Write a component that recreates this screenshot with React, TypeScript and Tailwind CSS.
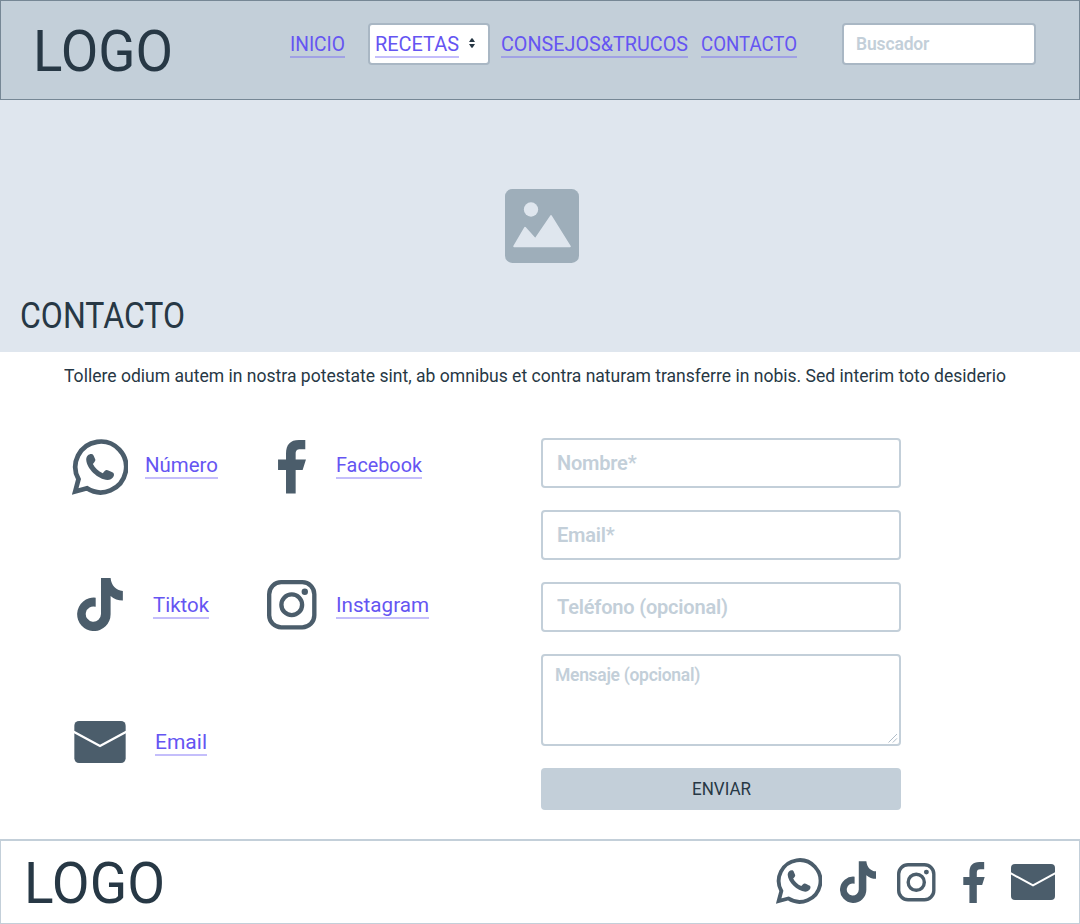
import { useLayoutEffect, useRef, useState } from "react";
import type { ReactNode } from "react";

/** Single line of text, condensed or widened to fill the width of its box. */
function FitText({ children, className = "" }: { children: ReactNode; className?: string }) {
  const box = useRef<HTMLSpanElement>(null);
  const text = useRef<HTMLSpanElement>(null);
  const [scale, setScale] = useState(1);
  useLayoutEffect(() => {
    if (box.current && text.current && text.current.offsetWidth) {
      setScale(box.current.clientWidth / text.current.getBoundingClientRect().width);
    }
  }, []);
  return (
    <span ref={box} className={`block whitespace-nowrap ${className}`}>
      <span ref={text} className="inline-block origin-left align-top" style={{ transform: `scaleX(${scale})` }}>
        {children}
      </span>
    </span>
  );
}

function NavLink({ children, className = "" }: { children: ReactNode; className?: string }) {
  return (
    <a href="#" className={`block shrink-0 border-b-2 border-[#6b5cf6]/40 text-[#6555f2] ${className}`}>
      <FitText className="h-6 w-full text-[21px] leading-6 font-[450]">{children}</FitText>
    </a>
  );
}

type IconProps = { className?: string };

function WhatsappIcon({ className }: IconProps) {
  return (
    <svg viewBox="0 0 56 56" className={className}>
      <path d="M3.200 52.500 L6.500 40.200 A25.400 25.400 0 1 1 15 49.300 Z" fill="none" stroke="currentColor" strokeWidth="4.700" />
      <path
        d="M14.2 20.5C14.2 17 16.8 14.8 19.4 14.9C20.7 14.9 21.3 15.6 21.8 16.9L23.3 20.6C23.7 21.7 22.8 22.9 20.9 25C22.7 28.8 26.3 32.3 30.8 34.2C32.8 31.9 33.6 30.8 34.8 31C36.6 31.3 39.6 32.8 41.2 33.8C43.6 36.2 40.4 41 35.6 41C25.8 40.4 14.6 29.6 14.2 20.5Z"
        fill="currentColor"
      />
    </svg>
  );
}

function FacebookIcon({ className }: IconProps) {
  return (
    <svg viewBox="84 45 84 161" className={className} fill="currentColor">
      <path d="M108 206V135H84V104H108V86C108 59 121 45 147 45H166V73H151C141 73 137 77 137 87V104H168L158 135H137V206Z" />
    </svg>
  );
}

function TiktokIcon({ className }: IconProps) {
  return (
    <svg viewBox="81 54 138 160" className={className} fill="currentColor">
      <path d="M153 54H182C184 76 198 92 219 93V122C205 122 192 117 182 108V163.5A50.5 50.5 0 1 1 137 113.5V141A23 23 0 1 0 153 163Z" />
    </svg>
  );
}

function InstagramIcon({ className }: IconProps) {
  return (
    <svg viewBox="0 0 148 148" className={className} fill="none" stroke="currentColor" strokeWidth="13">
      <rect x="6.5" y="6.5" width="135" height="135" rx="36" />
      <circle cx="74" cy="74" r="31" />
      <circle cx="113" cy="35" r="9.5" fill="currentColor" stroke="none" />
    </svg>
  );
}

function MailIcon({ className }: IconProps) {
  return (
    <svg viewBox="0 0 154 126" className={className}>
      <rect width="154" height="126" rx="14" fill="currentColor" />
      <path d="M-2 32L77 75L156 32" fill="none" stroke="#fff" strokeWidth="7" />
    </svg>
  );
}

function ImageIcon({ className }: IconProps) {
  return (
    <svg viewBox="45 27 222 222" className={className}>
      <rect x="45" y="27" width="222" height="222" rx="22" fill="#9eaeba" />
      <g fill="#dfe6ee" stroke="#dfe6ee" strokeLinejoin="round">
        <circle cx="123" cy="88.500" r="21.500" stroke="none" />
        <path d="M72 199L105 143L136 177L183 108L240 199Z" strokeWidth="5" />
      </g>
    </svg>
  );
}

const fieldClass =
  "block h-[50px] w-full rounded border-2 border-[#c3cfd9] bg-white px-[14px] text-[20px] font-semibold tracking-[-0.2px] text-[#273845] outline-none placeholder:text-[#c3cfd9] placeholder:opacity-100";

export default function App() {
  return (
    <div className="flex h-[924px] w-[1080px] flex-col overflow-hidden bg-white font-['Roboto','Liberation_Sans',sans-serif] text-[#273845]">
      <header className="flex h-[100px] shrink-0 items-start border border-[#768795] bg-[#c3cfd9]">
        <FitText className="mt-[15px] ml-[32px] h-[70px] w-[140px] text-[58px] leading-[70px]">LOGO</FitText>
        <nav className="ml-[117px] flex items-start pt-[22px]">
          <NavLink className="mt-[9px] w-[55px]">INICIO</NavLink>
          <div className="ml-[23px] flex h-[42px] w-[122px] items-start rounded border-2 border-[#a9b7c4] bg-white pt-[7px] pl-[5px]">
            <NavLink className="w-[84px]">RECETAS</NavLink>
            <svg viewBox="0 0 6 10" className="mt-[6px] ml-[10px] h-[10px] w-[6px]" fill="#273845">
              <path d="M0 4L2.300 .6Q3 0 3.700 .6L6 4ZM0 6H6L3.700 9.400Q3 10 2.300 9.400Z" />
            </svg>
          </div>
          <NavLink className="mt-[9px] ml-[11px] w-[187px]">CONSEJOS&amp;TRUCOS</NavLink>
          <NavLink className="mt-[9px] ml-[13px] w-[96px]">CONTACTO</NavLink>
        </nav>
        <input
          placeholder="Buscador"
          className="mt-[22px] ml-[45px] h-[42px] w-[194px] rounded border-2 border-[#a9b7c4] bg-white px-3 text-[17.500px] font-semibold tracking-[-0.15px] outline-none placeholder:text-[#c3cfd9] placeholder:opacity-100"
        />
      </header>

      <section className="flex h-[252px] shrink-0 flex-col bg-[#dfe6ee]">
        <ImageIcon className="mt-[89px] ml-[505px] size-[74px]" />
        <FitText className="mt-[31px] ml-[20px] h-[44px] w-[165px] text-[36px] leading-[44px]">CONTACTO</FitText>
      </section>

      <main className="flex h-[487px] shrink-0 flex-col">
        <p className="mt-[12px] ml-[64px]">
          <FitText className="h-6 w-[942px] text-[17.500px] leading-6">
            Tollere odium autem in nostra potestate sint, ab omnibus et contra naturam transferre in nobis. Sed interim toto desiderio
          </FitText>
        </p>
        <div className="flex pt-[50px]">
          <div className="flex w-[541px] flex-col pl-[72px] text-[#4b5d6b]">
            <div className="flex h-[140px] items-start">
              <WhatsappIcon className="mt-px size-[56px]" />
              <NavLink className="mt-[15px] ml-[17px] w-[73px]">Número</NavLink>
              <FacebookIcon className="mt-[2px] ml-[60px] h-[53.500px] w-[28px]" />
              <NavLink className="mt-[15px] ml-[30px] w-[86px]">Facebook</NavLink>
            </div>
            <div className="flex h-[140px] items-start pl-[5px]">
              <TiktokIcon className="h-[53px] w-[46px]" />
              <NavLink className="mt-[15px] ml-[30px] w-[56px]">Tiktok</NavLink>
              <InstagramIcon className="mt-[2px] ml-[58px] size-[49.500px]" />
              <NavLink className="mt-[15px] ml-[19.500px] w-[93px]">Instagram</NavLink>
            </div>
            <div className="flex items-start pl-[2px]">
              <MailIcon className="mt-[3px] h-[42px] w-[52px]" />
              <NavLink className="mt-[12px] ml-[29px] w-[52px]">Email</NavLink>
            </div>
          </div>
          <form className="flex w-[360px] flex-col gap-[22px]">
            <input placeholder="Nombre*" className={fieldClass} />
            <input placeholder="Email*" className={fieldClass} />
            <input placeholder="Teléfono (opcional)" className={fieldClass} />
            <div className="relative h-[92px]">
              <textarea
                placeholder="Mensaje (opcional)"
                className="block h-full w-full resize-none rounded border-2 border-[#c3cfd9] bg-white px-3 py-[8px] text-[17.500px] leading-[22px] font-semibold tracking-[-0.3px] outline-none placeholder:text-[#c3cfd9] placeholder:opacity-100"
              />
              <svg viewBox="0 0 10 10" className="absolute right-[3px] bottom-[3px] size-[10px]" stroke="#b0bdc9" fill="none">
                <path d="M.5 9.500L9 1M4.800 9.500L9 5.300" />
              </svg>
            </div>
            <button type="button" className="flex h-[42px] items-center justify-center rounded bg-[#c3cfd9]">
              <FitText className="ml-px h-6 w-[59px] text-[17.500px] leading-6">ENVIAR</FitText>
            </button>
          </form>
        </div>
      </main>

      <footer className="flex h-[85px] shrink-0 items-start border border-t-2 border-[#c3cfd9] text-[#4b5d6b]">
        <FitText className="mt-[7px] ml-[23px] h-[70px] w-[141px] text-[58px] leading-[70px] text-[#273845]">LOGO</FitText>
        <div className="ml-[611px] flex items-start">
          <WhatsappIcon className="mt-[17px] size-[46px]" />
          <TiktokIcon className="mt-[20px] ml-[18px] h-[42px] w-[36px]" />
          <InstagramIcon className="mt-[22px] ml-[21px] size-[38.500px]" />
          <FacebookIcon className="mt-[21px] ml-[27.500px] h-[41px] w-[22px]" />
          <MailIcon className="mt-[23px] ml-[26px] h-[36px] w-[44px]" />
        </div>
      </footer>
    </div>
  );
}
